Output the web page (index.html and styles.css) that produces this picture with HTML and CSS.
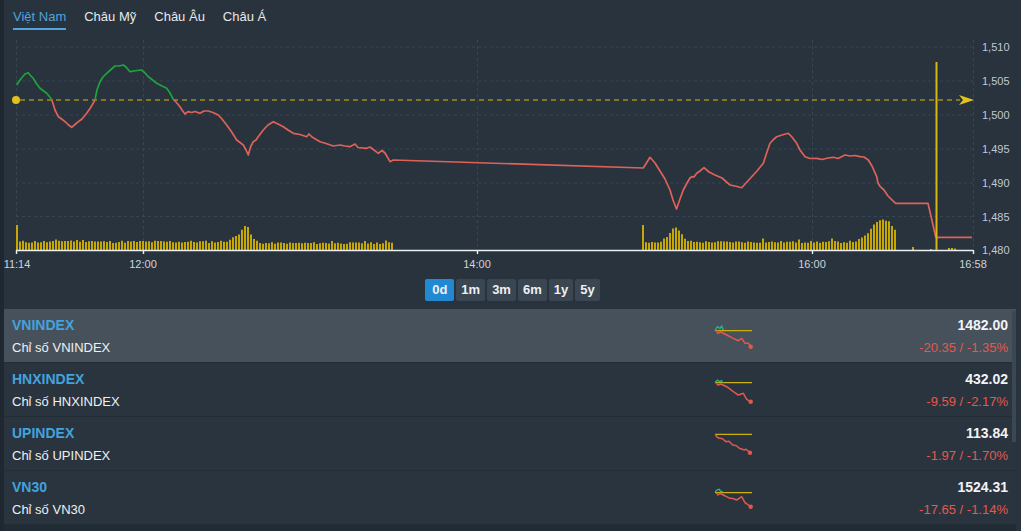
FILE: index.html
```html
<!DOCTYPE html>
<html lang="vi">
<head>
<meta charset="utf-8">
<title>Chỉ số</title>
<link rel="stylesheet" href="styles.css">
</head>
<body>
<div class="app">
  <nav class="tabs">
    <span class="tab active">Việt Nam</span>
    <span class="tab">Châu Mỹ</span>
    <span class="tab">Châu Âu</span>
    <span class="tab">Châu Á</span>
  </nav>

  <svg class="chart" width="1017" height="242" viewBox="4 30 1017 242" xmlns="http://www.w3.org/2000/svg">
    <defs>
      <clipPath id="above"><rect x="0" y="0" width="1021" height="100"/></clipPath>
      <clipPath id="below"><rect x="0" y="100" width="1021" height="200"/></clipPath>
    </defs>
    <g class="grid">
      <path d="M16 47H973M16 81H973M16 115H973M16 149H973M16 183H973M16 216.5H973"/>
      <path d="M16.5 40V250M143.5 40V250M477.5 40V250M812.5 40V250M973.5 40V250"/>
    </g>
    <g class="yaxis">
      <text x="982" y="51">1,510</text>
      <text x="982" y="85">1,505</text>
      <text x="982" y="119">1,500</text>
      <text x="982" y="153">1,495</text>
      <text x="982" y="187">1,490</text>
      <text x="982" y="221">1,485</text>
      <text x="982" y="254">1,480</text>
    </g>
    <path id="vol" class="vol" d=""/>
    <path class="axis" d="M16 250.5H973.5M16.5 250V254M143.5 250V254M477.5 250V254M812.5 250V254M973.5 250V254"/>
    <g class="xaxis">
      <text x="17" y="268">11:14</text>
      <text x="143" y="268">12:00</text>
      <text x="477" y="268">14:00</text>
      <text x="812" y="268">16:00</text>
      <text x="973" y="268">16:58</text>
    </g>
    <line class="ref" x1="20" y1="100" x2="960" y2="100"/>
    <circle cx="16" cy="100" r="4" class="refdot"/>
    <polygon class="refdot" points="959,95 974,100 959,105 963,100"/>
    <g id="price">
      <path id="pl" class="line up" clip-path="url(#above)" d="M16.7 85 L20 80 L23.3 76 L25 74 L28.3 72.7 L30 75 L33.3 78.3 L36 83 L40 88.3 L43 90.5 L46.7 93.3 L49 96 L51.7 99.3 L55 110 L58.3 116.7 L61 118.5 L65 121.7 L68 124.5 L71.7 127.3 L75 124.5 L78.3 121.7 L82 119 L86.7 113.3 L90 108.5 L95 100 L97 90 L100 81.7 L103 77 L106.7 73.3 L111 69.5 L115 66 L119 66 L123.3 65 L126 67 L130 71.7 L134 71 L137 70.5 L141.7 70 L145 73 L148.3 76.7 L152 79.5 L156.7 83.3 L161 85.5 L166.7 88.3 L170 93 L173.3 99.3 L176 102 L180 106.7 L182 110 L185 114 L188 111.7 L191.7 112.5 L195 111.5 L200 113.3 L204 111 L208.3 111 L213 112.5 L218.3 115 L222 119 L226.7 125 L231 131 L236.7 140 L240 142.5 L243.3 145 L246 150 L248.3 155 L250.5 147 L253.3 141.7 L256 140 L258 137 L263.3 130 L268 125 L273.3 121.7 L278 124 L283.3 126.7 L288 130 L293.3 133.3 L300 134.5 L306.7 136.7 L309 134 L312 137 L320 141.7 L326 143.5 L333.3 146 L340 145 L345 146 L350 146.7 L355 144 L358 147.5 L366.7 148.3 L370 147 L374 150 L378.3 153.3 L382 150.5 L385 153 L390 161.7 L393.3 160 L643.3 168 L650 157.3 L655 163 L660 171 L665 179 L670 190 L673 200 L676.5 209 L680 199 L683.3 190 L687 183 L690 178 L691.7 176.7 L694 177 L696.7 173.3 L700 171 L704 167.7 L709 172 L715 175 L722 178 L730 185 L735 186 L741.7 187.7 L746 183 L751.7 176.7 L757 171 L763.3 163.3 L767 152 L770 143.3 L773 140 L776.7 136.7 L782 135 L788.3 133.3 L792 137 L796.7 143.3 L800 150 L805 156.7 L810 158.5 L816.7 158.3 L822 159.5 L828 158 L833.3 157.3 L838 158.5 L845 155 L850 156 L855 155.5 L860 156.7 L864 157 L868.3 160 L872 166 L876.7 176.7 L878 183 L880.3 186.7 L884 190 L888 196 L895.6 203.3 L928 203.3 L935.8 237.3 L972 237.3"/>
    </g>
    <line class="spike" x1="936.5" y1="62" x2="936.5" y2="250"/>
  </svg>

  <div class="ranges">
    <button class="rb active">0d</button>
    <button class="rb">1m</button>
    <button class="rb">3m</button>
    <button class="rb">6m</button>
    <button class="rb">1y</button>
    <button class="rb">5y</button>
  </div>

  <div class="list">
    <div class="row selected">
      <div class="info"><div class="sym">VNINDEX</div><div class="name">Chỉ số VNINDEX</div></div>
      <svg class="spark" width="44" height="54" viewBox="2 0 44 54">
        <path class="sy" d="M3 21.7H40"/>
        <path class="sg" d="M3 21.7L5.3 17.7L8 19.3L9.7 17L11.3 21"/>
        <path class="sr" d="M4.7 21L5.7 24.3L9 23L14.7 26L21.3 29.3L26.3 31.7L29.7 29.3L33 34.3L36.3 34.3L38.7 37.7"/>
        <circle class="sd" cx="38.7" cy="37.7" r="2.2"/>
      </svg>
      <div class="vals"><div class="val">1482.00</div><div class="chg">-20.35 / -1.35%</div></div>
    </div>
    <div class="row">
      <div class="info"><div class="sym">HNXINDEX</div><div class="name">Chỉ số HNXINDEX</div></div>
      <svg class="spark" width="44" height="54" viewBox="2 0 44 54">
        <path class="sy" d="M3 19.7H40"/>
        <path class="sg" d="M3 19.7L5.3 17L7.5 18.5L9.5 17.5L11 20"/>
        <path class="sr" d="M4.7 20.5L6 22L9 21L14.7 23.7L21.3 28.7L26.3 32L31.3 30.3L34.7 36.3L38.7 38.7"/>
        <circle class="sd" cx="38.7" cy="38.7" r="2.2"/>
      </svg>
      <div class="vals"><div class="val">432.02</div><div class="chg">-9.59 / -2.17%</div></div>
    </div>
    <div class="row">
      <div class="info"><div class="sym">UPINDEX</div><div class="name">Chỉ số UPINDEX</div></div>
      <svg class="spark" width="44" height="54" viewBox="2 0 44 54">
        <path class="sy" d="M3 17.3H40"/>
        <path class="sr" d="M3.3 17.3L5 20L7.3 21.3L10 21.5L14 24.7L17 24.3L20.7 28L24 28.5L27.3 31.3L32.3 33L34 32.3L38 35.7"/>
        <circle class="sd" cx="38" cy="35.7" r="2.2"/>
      </svg>
      <div class="vals"><div class="val">113.84</div><div class="chg">-1.97 / -1.70%</div></div>
    </div>
    <div class="row">
      <div class="info"><div class="sym">VN30</div><div class="name">Chỉ số VN30</div></div>
      <svg class="spark" width="44" height="54" viewBox="2 0 44 54">
        <path class="sy" d="M3 21.7H40"/>
        <path class="sg" d="M3 20.7L5 19L7.3 18.3L9 21L10.5 20"/>
        <path class="sr" d="M4.7 22.3L6 24L8 22.5L11.3 24L18 27.3L21 27.5L24.7 29L29.7 25.7L33 31.7L35 33L38.7 35.7"/>
        <circle class="sd" cx="38.7" cy="35.7" r="2.2"/>
      </svg>
      <div class="vals"><div class="val">1524.31</div><div class="chg">-17.65 / -1.14%</div></div>
    </div>
    <div class="scrollbar"></div>
  </div>
</div>
<script src="script.js"></script>
</body>
</html>
```

FILE: styles.css
```css
html, body {
  margin: 0;
  padding: 0;
}
body {
  background: #1f2830;
  font-family: "Liberation Sans", Arial, sans-serif;
  width: 1021px;
  height: 531px;
  overflow: hidden;
}
.app {
  margin-left: 4px;
  width: 1017px;
  height: 531px;
  background: #28333e;
  display: flex;
  flex-direction: column;
}
.tabs {
  display: flex;
  gap: 18px;
  height: 30px;
  padding: 9px 0 0 9px;
  box-sizing: border-box;
}
.tab {
  font-size: 13px;
  line-height: 16px;
  color: #e6e8ea;
  padding-bottom: 3px;
}
.tab.active {
  color: #4ea4dc;
  border-bottom: 2px solid #4ea4dc;
}
.chart {
  display: block;
  flex: none;
}
.grid path {
  fill: none;
  stroke: #384552;
  stroke-width: 1;
  stroke-dasharray: 3 3;
}
.yaxis text, .xaxis text {
  font-family: "Liberation Sans", Arial, sans-serif;
  font-size: 11px;
  fill: #c3c8ce;
}
.xaxis text {
  text-anchor: middle;
  fill: #d0d4d8;
}
.vol {
  fill: none;
  stroke: #c6a804;
  stroke-width: 2;
}
.axis {
  fill: none;
  stroke: #eceff1;
  stroke-width: 1.4;
}
.ref {
  stroke: #d8b90a;
  stroke-width: 1.2;
  stroke-dasharray: 5 4;
}
.refdot {
  fill: #e2c11a;
}
.line {
  fill: none;
  stroke-width: 1.7;
  stroke-linejoin: round;
}
.line.up {
  stroke: #1fa33a;
}
.line.down {
  stroke: #df6259;
}
.spike {
  stroke: #d8b80c;
  stroke-width: 2;
}
.ranges {
  display: flex;
  justify-content: center;
  gap: 2px;
  height: 31px;
  padding-top: 7px;
  box-sizing: border-box;
  flex: none;
}
.rb {
  font-family: "Liberation Sans", Arial, sans-serif;
  font-size: 13px;
  font-weight: bold;
  color: #eef0f2;
  background: #3a4652;
  border: 0;
  border-radius: 2px;
  height: 22px;
  padding: 0 5px;
  min-width: 24px;
  margin: 0;
  line-height: 22px;
}
.rb.active {
  background: #2189d2;
  min-width: 29px;
}
.list {
  position: relative;
  margin-top: 6px;
  margin-right: 5px;
  background: #212b34;
  flex: 1;
}
.row {
  display: grid;
  grid-template-columns: 1fr 44px 250px;
  height: 54px;
  padding: 0 8px;
  box-sizing: border-box;
  background: #29343f;
  border-bottom: 1px solid #232d36;
}
.row.selected {
  background: #46515b;
}
.info, .vals {
  padding-top: 8px;
}
.sym {
  font-size: 14px;
  font-weight: bold;
  line-height: 17px;
  color: #44a2dd;
}
.name {
  font-size: 13px;
  line-height: 17px;
  margin-top: 5px;
  color: #eef0f2;
}
.vals {
  text-align: right;
}
.val {
  font-size: 14px;
  font-weight: bold;
  line-height: 17px;
  color: #f2f3f4;
}
.chg {
  font-size: 13px;
  line-height: 17px;
  margin-top: 5px;
  color: #e5584b;
}
.spark {
  display: block;
}
.spark .sy {
  fill: none;
  stroke: #c9b10e;
  stroke-width: 1.2;
}
.spark .sg {
  fill: none;
  stroke: #2fb68a;
  stroke-width: 1.3;
}
.spark .sr {
  fill: none;
  stroke: #e2584c;
  stroke-width: 1.5;
  stroke-linejoin: round;
}
.spark .sd {
  fill: #e2584c;
}
.scrollbar {
  position: absolute;
  right: 0;
  top: 2px;
  width: 4px;
  height: 131px;
  background: #3b4753;
}
```

FILE: script.js
```js
(function () {
  var s = 11;
  function rnd() { s = (s * 9301 + 49297) % 233280; return s / 233280; }
  function g(x, c, w, a) { return a * Math.exp(-((x - c) * (x - c)) / (2 * w * w)); }
  var d = [];
  function bar(x, h) { if (h > 0.3) d.push('M' + x + ' 250V' + (250 - h).toFixed(1)); }

  for (var x = 17; x <= 392; x += 3) {
    var h;
    if (x < 19) h = 25;
    else if (x < 258) h = 7 + rnd() * 2.5 + (x > 55 && x < 95 ? 1 : 0);
    else h = 6 + rnd() * 1.8;
    h += g(x, 246, 4, 12) + g(x, 240, 7, 6);
    if (x === 332 || x === 365 || x === 386) h += 2.5;
    bar(x, h);
  }
  for (x = 643; x <= 897; x += 3) {
    if (x < 645) h = 25;
    else h = 7 + rnd() * 2;
    h += g(x, 675, 6, 14);
    h += g(x, 883, 11, 23);
    if (x === 763 || x === 799 || x === 832) h += 3;
    if (x > 895) h = 9;
    bar(x, h);
  }
  [[913, 3], [931, 1], [949, 2], [952, 2], [955, 1.5]].forEach(function (b) { bar(b[0], b[1]); });
  document.getElementById('vol').setAttribute('d', d.join(''));

  var up = document.getElementById('pl');
  var down = up.cloneNode();
  down.removeAttribute('id');
  down.setAttribute('class', 'line down');
  down.setAttribute('clip-path', 'url(#below)');
  up.parentNode.appendChild(down);
})();
```
